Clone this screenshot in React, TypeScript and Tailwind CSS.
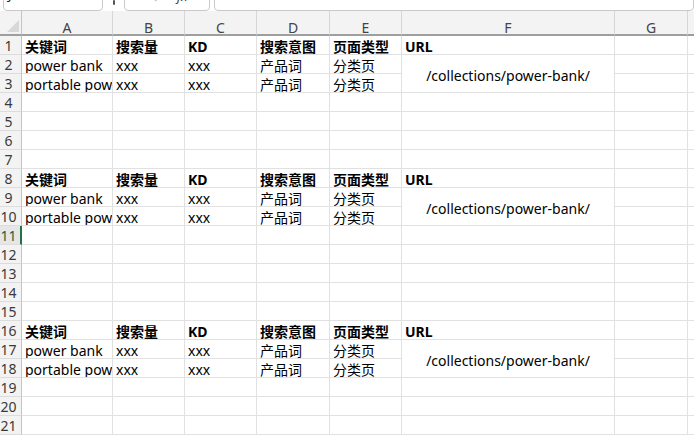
import React from 'react';

const COLS = ['A', 'B', 'C', 'D', 'E', 'F', 'G'];
const HEAD = ['关键词', '搜索量', 'KD', '搜索意图', '页面类型', 'URL'];
const ROW1 = ['power bank', 'xxx', 'xxx', '产品词', '分类页'];
const ROW2 = ['portable pow', 'xxx', 'xxx', '产品词', '分类页'];
const BLOCKS = [1, 8, 16];
const URL = '/collections/power-bank/';

const font = { fontFamily: '"Noto Sans", "Noto Sans CJK SC", sans-serif' };

function Cell({ children, bold }: { children?: React.ReactNode; bold?: boolean }) {
  return (
    <div
      className={
        'border-r border-b border-[#e1e1e1] overflow-hidden whitespace-nowrap text-[14px] text-black leading-[14px] pl-[3px] flex items-end ' +
        (bold ? 'font-bold' : '')
      }
    >
      {children}
    </div>
  );
}

function UrlCell() {
  return (
    <div className="row-span-2 border-r border-b border-[#e1e1e1] overflow-hidden whitespace-nowrap text-[14px] text-black leading-[15px] flex items-center justify-center pt-[4px]">
      {URL}
    </div>
  );
}

function RowHead({ n }: { n: number }) {
  const sel = n === 11;
  return (
    <div
      className={
        'border-b border-[#dcdcdc] flex items-end text-[14px] leading-[16px] ' +
        (sel
          ? 'bg-[#e6e6e6] text-[#1c5e3b] border-r-2 border-r-[#217346]'
          : 'bg-[#f3f3f3] text-[#3a3a3a] border-r border-r-[#c4c4c4]')
      }
    >
      <span className="w-[17px] text-center">{n}</span>
    </div>
  );
}

function rowCells(r: number) {
  for (const s of BLOCKS) {
    if (r === s) return { cells: HEAD, bold: true, merge: 'none' as const };
    if (r === s + 1) return { cells: ROW1, bold: false, merge: 'start' as const };
    if (r === s + 2) return { cells: ROW2, bold: false, merge: 'skip' as const };
  }
  return { cells: [] as string[], bold: false, merge: 'none' as const };
}

export default function App() {
  const rows = Array.from({ length: 21 }, (_, i) => i + 1);
  return (
    <div className="w-[694px] h-[437px] overflow-hidden bg-white" style={font}>
      {/* formula bar, mostly scrolled off */}
      <div className="h-[11px] overflow-hidden flex items-end pl-[3px]">
        <div className="w-[100px] h-[30px] shrink-0 border border-[#c9c9c9] rounded-[4px] flex items-end justify-between pl-[4px] pr-[6px] pb-[7px] text-[13px] leading-[15px] text-[#222]">
          <span>J11</span>
          <svg width="8" height="6" viewBox="0 0 8 6" className="mb-[5px]">
            <path d="M1 1l3 3 3-3" fill="none" stroke="#444" strokeWidth="1.2" />
          </svg>
        </div>
        <div className="w-[21px] h-[11px] shrink-0 flex justify-center">
          <span className="w-[2px] h-[5px] bg-[#555] rounded-full"></span>
        </div>
        <div className="w-[86px] h-[30px] shrink-0 border border-[#c9c9c9] rounded-[4px] flex items-end gap-[9px] px-[8px] pb-[6px] text-[13px] leading-[15px] text-[#c0c0c0]">
          <span>✕</span>
          <span>✓</span>
          <span className="italic text-[#444] ml-[6px]">fx</span>
        </div>
        <div className="flex-1 h-[30px] ml-[4px] border border-[#c9c9c9] rounded-[4px]"></div>
      </div>

      <div className="grid grid-cols-[22px_91px_72px_72px_73px_72px_213px_73px_1fr] grid-rows-[25px_repeat(21,19px)]">
        {/* corner */}
        <div className="bg-[#f3f3f3] border-r border-[#c4c4c4] border-b-2 border-b-[#9e9e9e] flex items-end justify-end pr-[2px] pb-[2px]">
          <svg width="12" height="12" viewBox="0 0 12 12">
            <path d="M12 0L12 12L0 12Z" fill="#d8d8d8" />
          </svg>
        </div>
        {COLS.map((c) => (
          <div
            key={c}
            className="bg-[#f3f3f3] border-r border-[#d6d6d6] border-b-2 border-b-[#9e9e9e] flex items-end justify-center text-[14px] leading-[12px] text-[#444]"
          >
            {c}
          </div>
        ))}
        <div className="bg-[#f3f3f3] border-b-2 border-b-[#9e9e9e]"></div>

        {rows.map((r) => {
          const { cells, bold, merge } = rowCells(r);
          return (
            <React.Fragment key={r}>
              <RowHead n={r} />
              {[0, 1, 2, 3, 4].map((i) => (
                <Cell key={i} bold={bold}>
                  {cells[i]}
                </Cell>
              ))}
              {merge === 'start' ? <UrlCell /> : merge === 'skip' ? null : <Cell bold={bold}>{cells[5]}</Cell>}
              <Cell />
              <div className="border-b border-[#e1e1e1]"></div>
            </React.Fragment>
          );
        })}
      </div>
    </div>
  );
}
